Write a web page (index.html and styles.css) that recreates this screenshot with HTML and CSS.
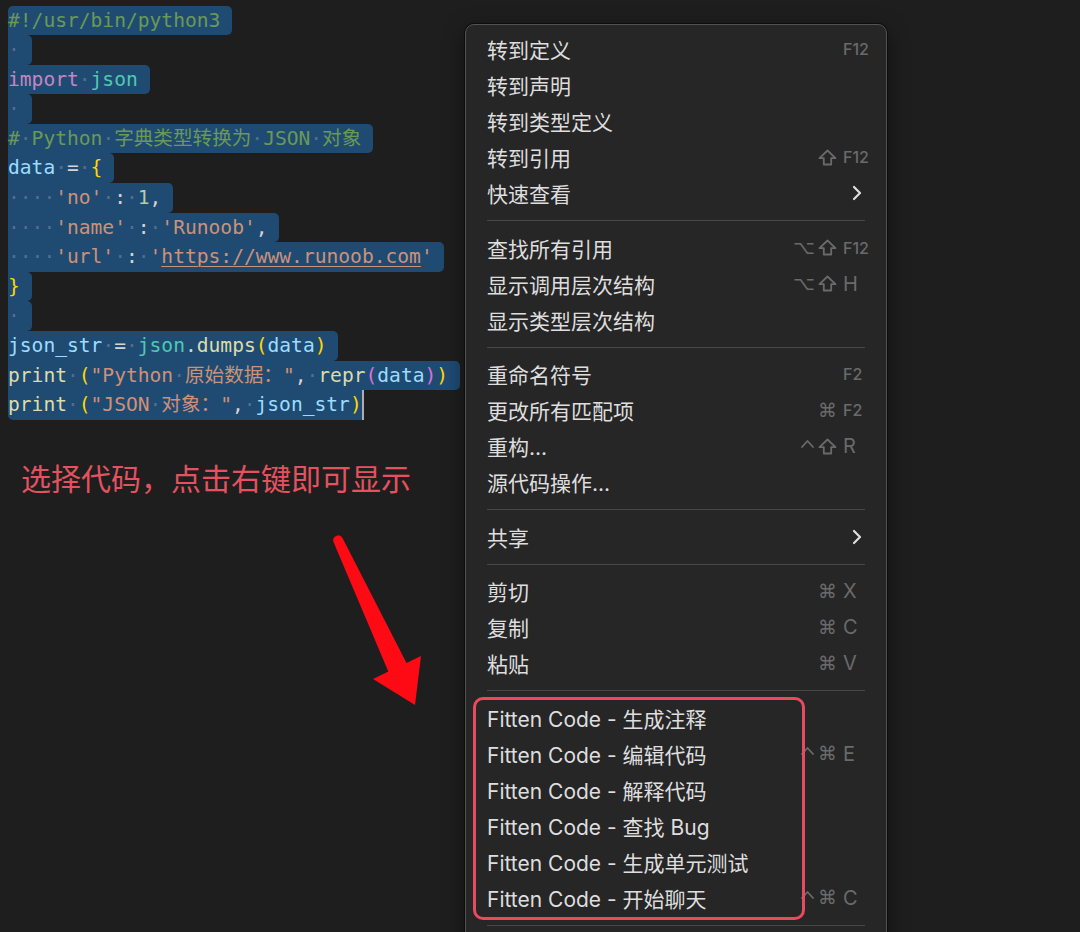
FILE: index.html
```html
<!DOCTYPE html>
<html lang="zh-CN">
<head>
    <meta charset="UTF-8">
    <title>Fitten Code 右键菜单</title>
    <link rel="stylesheet" href="styles.css">
</head>
<body>
    <div class="editor">
        <div class="code">
            <div class="ln"><span class="sel first"><span class="cm">#!/usr/bin/python3</span></span></div>
            <div class="ln"><span class="sel"><span class="ws">·</span></span></div>
            <div class="ln"><span class="sel"><span class="kw">import</span><span class="ws">·</span><span class="mod">json</span></span></div>
            <div class="ln"><span class="sel"><span class="ws">·</span></span></div>
            <div class="ln"><span class="sel"><span class="cm">#<span class="ws">·</span>Python<span class="ws">·</span>字典类型转换为<span class="ws">·</span>JSON<span class="ws">·</span>对象</span></span></div>
            <div class="ln"><span class="sel"><span class="var">data</span><span class="ws">·</span><span class="op">=</span><span class="ws">·</span><span class="br">{</span></span></div>
            <div class="ln"><span class="sel"><span class="ws">····</span><span class="str">'no'</span><span class="ws">·</span><span class="op">:</span><span class="ws">·</span><span class="num">1</span><span class="op">,</span></span></div>
            <div class="ln"><span class="sel"><span class="ws">····</span><span class="str">'name'</span><span class="ws">·</span><span class="op">:</span><span class="ws">·</span><span class="str">'Runoob'</span><span class="op">,</span></span></div>
            <div class="ln"><span class="sel"><span class="ws">····</span><span class="str">'url'</span><span class="ws">·</span><span class="op">:</span><span class="ws">·</span><span class="str">'<u>https://www.runoob.com</u>'</span></span></div>
            <div class="ln"><span class="sel"><span class="br">}</span></span></div>
            <div class="ln"><span class="sel"><span class="ws">·</span></span></div>
            <div class="ln"><span class="sel"><span class="var">json_str</span><span class="ws">·</span><span class="op">=</span><span class="ws">·</span><span class="mod">json</span><span class="op">.</span><span class="fn">dumps</span><span class="br">(</span><span class="var">data</span><span class="br">)</span></span></div>
            <div class="ln"><span class="sel"><span class="fn">print</span><span class="ws">·</span><span class="br">(</span><span class="str">"Python<span class="ws">·</span>原始数据："</span><span class="op">,</span><span class="ws">·</span><span class="fn">repr</span><span class="br2">(</span><span class="var">data</span><span class="br2">)</span><span class="br">)</span></span></div>
            <div class="ln"><span class="sel last"><span class="fn">print</span><span class="ws">·</span><span class="br">(</span><span class="str">"JSON<span class="ws">·</span>对象："</span><span class="op">,</span><span class="ws">·</span><span class="var">json_str</span><span class="br">)</span></span><span class="caret"></span></div>
        </div>
        <p class="note">选择代码，点击右键即可显示</p>
    </div>

    <svg class="arrow" width="1080" height="932" viewBox="0 0 1080 932">
        <path d="M333.5 542.1 A5 5 0 0 1 342.5 537.9 L406.5 663.1 L421 656 L415 705 L373 679 L388.3 671.5 Z" fill="#fe0a14"/>
    </svg>

    <div class="menu">
        <div class="item"><span class="label">转到定义</span><span class="keys"><span class="key fkey">F12</span></span></div>
        <div class="item"><span class="label">转到声明</span></div>
        <div class="item"><span class="label">转到类型定义</span></div>
        <div class="item"><span class="label">转到引用</span><span class="keys"><span class="mods"><svg class="shift" width="19" height="17" viewBox="0 0 19 17"><path d="M9.5 1.5 L17.5 9.2 H13.2 V15.5 H5.8 V9.2 H1.5 Z"/></svg></span><span class="key fkey">F12</span></span></div>
        <div class="item"><span class="label">快速查看</span><span class="keys"><span class="key sub"><svg width="10" height="16" viewBox="0 0 10 16"><path d="M2 2 L8 8 L2 14"/></svg></span></span></div>
        <div class="sep"></div>
        <div class="item"><span class="label">查找所有引用</span><span class="keys"><span class="mods"><span class="opt">⌥</span><svg class="shift" width="19" height="17" viewBox="0 0 19 17"><path d="M9.5 1.5 L17.5 9.2 H13.2 V15.5 H5.8 V9.2 H1.5 Z"/></svg></span><span class="key fkey">F12</span></span></div>
        <div class="item"><span class="label">显示调用层次结构</span><span class="keys"><span class="mods"><span class="opt">⌥</span><svg class="shift" width="19" height="17" viewBox="0 0 19 17"><path d="M9.5 1.5 L17.5 9.2 H13.2 V15.5 H5.8 V9.2 H1.5 Z"/></svg></span><span class="key">H</span></span></div>
        <div class="item"><span class="label">显示类型层次结构</span></div>
        <div class="sep"></div>
        <div class="item"><span class="label">重命名符号</span><span class="keys"><span class="key fkey">F2</span></span></div>
        <div class="item"><span class="label">更改所有匹配项</span><span class="keys"><span class="mods"><span class="cmd">⌘</span></span><span class="key fkey">F2</span></span></div>
        <div class="item"><span class="label">重构...</span><span class="keys"><span class="mods"><svg class="ctrl" width="15" height="17" viewBox="0 0 15 17"><path d="M2 9 L7.5 3 L13 9"/></svg><svg class="shift" width="19" height="17" viewBox="0 0 19 17"><path d="M9.5 1.5 L17.5 9.2 H13.2 V15.5 H5.8 V9.2 H1.5 Z"/></svg></span><span class="key">R</span></span></div>
        <div class="item"><span class="label">源代码操作...</span></div>
        <div class="sep"></div>
        <div class="item"><span class="label">共享</span><span class="keys"><span class="key sub"><svg width="10" height="16" viewBox="0 0 10 16"><path d="M2 2 L8 8 L2 14"/></svg></span></span></div>
        <div class="sep"></div>
        <div class="item"><span class="label">剪切</span><span class="keys"><span class="mods"><span class="cmd">⌘</span></span><span class="key">X</span></span></div>
        <div class="item"><span class="label">复制</span><span class="keys"><span class="mods"><span class="cmd">⌘</span></span><span class="key">C</span></span></div>
        <div class="item"><span class="label">粘贴</span><span class="keys"><span class="mods"><span class="cmd">⌘</span></span><span class="key">V</span></span></div>
        <div class="sep"></div>
        <div class="item"><span class="label">Fitten Code - 生成注释</span></div>
        <div class="item"><span class="label">Fitten Code - 编辑代码</span><span class="keys"><span class="mods"><svg class="ctrl" width="15" height="17" viewBox="0 0 15 17"><path d="M2 9 L7.5 3 L13 9"/></svg><span class="cmd">⌘</span></span><span class="key">E</span></span></div>
        <div class="item"><span class="label">Fitten Code - 解释代码</span></div>
        <div class="item"><span class="label">Fitten Code - 查找 Bug</span></div>
        <div class="item"><span class="label">Fitten Code - 生成单元测试</span></div>
        <div class="item"><span class="label">Fitten Code - 开始聊天</span><span class="keys"><span class="mods"><svg class="ctrl" width="15" height="17" viewBox="0 0 15 17"><path d="M2 9 L7.5 3 L13 9"/></svg><span class="cmd">⌘</span></span><span class="key">C</span></span></div>
        <div class="sep"></div>
    </div>

    <div class="mark"></div>
</body>
</html>
```

FILE: styles.css
```css
*{
    margin:0;
    padding:0;
    box-sizing:border-box;
}
html,body{
    width:1080px;
    height:932px;
    overflow:hidden;
}
body{
    position:relative;
    background:#1e1e1e;
    font-family:"Inter","Noto Sans CJK SC",sans-serif;
}

/* 代码区 */
.editor{
    padding:5.5px 0 0 8px;
}
.code{
    font-family:"DejaVu Sans Mono","Noto Sans CJK SC",monospace;
    font-size:19.6px;
    color:#d4d4d4;
}
.ln{
    height:29.6px;
    line-height:29.6px;
    white-space:pre;
}
.sel{
    display:inline-block;
    height:29.6px;
    padding-right:11.8px;
    background:#1f4b73;
    border-radius:0 5px 5px 0;
    vertical-align:top;
}
.sel.first{
    border-top-left-radius:5px;
}
.sel.last{
    padding-right:0;
    border-radius:0 0 0 5px;
}
.caret{
    display:inline-block;
    width:2px;
    height:29.6px;
    background:#aeafad;
    vertical-align:top;
}
.ws{color:rgba(210,210,210,0.28);}
.cm{color:#6a9955;}
.kw{color:#c586c0;}
.mod{color:#4ec9b0;}
.var{color:#9cdcfe;}
.op{color:#d4d4d4;}
.br{color:#ffd700;}
.br2{color:#da70d6;}
.str{color:#ce9178;}
.str u{text-decoration-thickness:1px;text-underline-offset:3px;}
.num{color:#b5cea8;}
.fn{color:#dcdcaa;}

.note{
    margin:37px 0 0 13px;
    font-family:"Noto Sans CJK SC",sans-serif;
    font-size:30px;
    line-height:40px;
    color:#e4525f;
}

.arrow{
    position:absolute;
    left:0;
    top:0;
}

/* 右键菜单 */
.menu{
    position:absolute;
    left:465px;
    top:24px;
    width:422px;
    padding:6px 0 20px;
    background:#262627;
    border:1px solid #525252;
    border-radius:9px;
    box-shadow:0 0 0 1px #0c0c0c, 0 6px 20px rgba(0,0,0,0.5);
}
.item{
    display:flex;
    align-items:center;
    height:36px;
    padding:0 17px 0 21px;
    font-size:21px;
    color:#dedede;
    white-space:nowrap;
}
.label{
    flex:1;
}
.keys{
    display:flex;
    align-items:center;
    color:#6a6a6a;
}
.mods{
    display:flex;
    align-items:center;
    gap:3px;
    margin-right:6px;
    font-family:"DejaVu Sans",sans-serif;
}
.mods svg path{
    fill:none;
    stroke:#6a6a6a;
    stroke-width:1.8;
    stroke-linejoin:round;
    stroke-linecap:round;
}
.mods .opt{
    font-size:19px;
    line-height:1;
}
.mods .cmd{
    font-size:19px;
    line-height:1;
}
.key{
    width:26px;
    font-size:20px;
}
.key.fkey{
    font-size:16px;
    font-weight:500;
}
.key.sub{
    display:flex;
    padding-left:9px;
}
.key.sub path{
    fill:none;
    stroke:#dedede;
    stroke-width:2.2;
    stroke-linecap:round;
    stroke-linejoin:round;
}
.sep{
    height:1px;
    margin:9px 21px 8.5px;
    background:#474747;
}

/* 红色标注框 */
.mark{
    position:absolute;
    left:473px;
    top:697px;
    width:332px;
    height:223px;
    border:3.5px solid #ea4a5f;
    border-radius:10px;
}
```
